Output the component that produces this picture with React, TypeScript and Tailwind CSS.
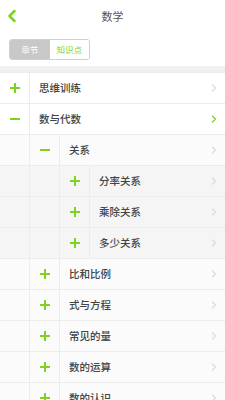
import { ChevronLeft, ChevronRight } from 'lucide-react';

type Row = { label: string; level: number; open?: boolean; active?: boolean };

const rows: Row[] = [
  { label: '思维训练', level: 0 },
  { label: '数与代数', level: 0, open: true, active: true },
  { label: '关系', level: 1, open: true },
  { label: '分率关系', level: 2 },
  { label: '乘除关系', level: 2 },
  { label: '多少关系', level: 2 },
  { label: '比和比例', level: 1 },
  { label: '式与方程', level: 1 },
  { label: '常见的量', level: 1 },
  { label: '数的运算', level: 1 },
  { label: '数的认识', level: 1 },
];

const rowBg = ['bg-white', 'bg-[#fbfbfb]', 'bg-[#f5f5f5]'];

function Sign({ open }: { open?: boolean }) {
  return (
    <svg width="10" height="10" viewBox="0 0 10 10">
      <rect x="0" y="4" width="10" height="2" fill="#7ed321" />
      {!open && <rect x="4" y="0" width="2" height="10" fill="#7ed321" />}
    </svg>
  );
}

function TreeRow({ row }: { row: Row }) {
  const spacers = Array.from({ length: row.level });
  return (
    <div className={`flex h-[31px] border-b border-[#ececec] ${rowBg[row.level]}`}>
      {spacers.map((_, i) => (
        <div key={i} className="w-[30px] shrink-0 border-r border-[#ececec]" />
      ))}
      <div className="w-[30px] shrink-0 border-r border-[#ececec] flex items-center justify-center">
        <Sign open={row.open} />
      </div>
      <div className="flex-1 flex items-center pl-[9px] text-[10.5px] font-medium text-[#444]">
        {row.label}
      </div>
      <div className="w-[22px] flex items-center justify-center">
        <ChevronRight
          size={12}
          strokeWidth={2.5}
          className={row.active ? 'text-[#7ed321]' : 'text-[#dcdcdc]'}
        />
      </div>
    </div>
  );
}

export default function App() {
  return (
    <div
      className="w-[225px] h-[400px] overflow-hidden bg-white"
      style={{ fontFamily: '"Noto Sans CJK SC", "Noto Sans", sans-serif' }}
    >
      <div className="relative h-[32px] flex items-center justify-center">
        <ChevronLeft
          size={20}
          strokeWidth={3}
          className="absolute left-[2px] top-[6px] text-[#7ed321]"
        />
        <span className="text-[11px] text-[#555]">数学</span>
      </div>
      <div className="h-[34px] px-[9px] pt-[7px]">
        <div className="flex w-[81px] h-[21px] rounded-[3px] border border-[#d0d0d0] overflow-hidden text-[8.5px]">
          <div className="flex-1 bg-[#c8c8c8] text-white flex items-center justify-center">章节</div>
          <div className="flex-1 bg-white text-[#7ed321] flex items-center justify-center">知识点</div>
        </div>
      </div>
      <div className="h-[6px] bg-[#f0f0f0]" />
      <div className="border-t border-[#ececec]">
        {rows.map((r) => (
          <TreeRow key={r.label} row={r} />
        ))}
      </div>
    </div>
  );
}
